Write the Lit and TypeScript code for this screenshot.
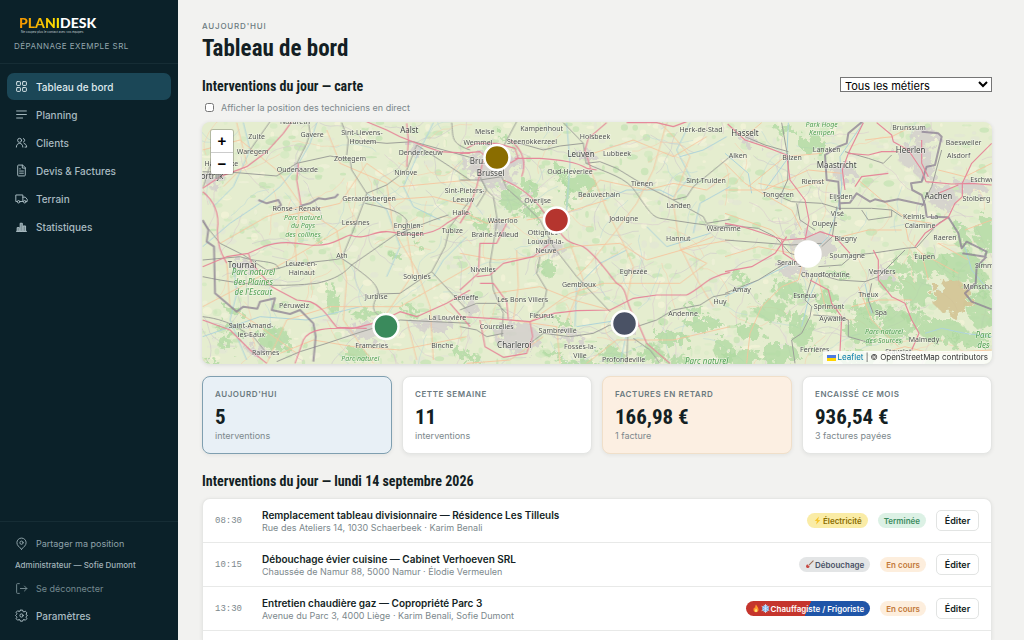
import { LitElement, html, svg, css } from "lit";
import { customElement, property } from "lit/decorators.js";

/* ---------- Icons ---------- */

const stroke = (body: unknown) => html`<svg viewBox="0 0 24 24" width="13" height="13" fill="none"
  stroke="currentColor" stroke-width="1.8" stroke-linecap="round" stroke-linejoin="round" aria-hidden="true">${body}</svg>`;

const icons: Record<string, unknown> = {
  grid: stroke(svg`<rect x="3" y="3" width="7" height="7" rx="1.2"/><rect x="14" y="3" width="7" height="7" rx="1.2"/><rect x="3" y="14" width="7" height="7" rx="1.2"/><rect x="14" y="14" width="7" height="7" rx="1.2"/>`),
  lines: stroke(svg`<path d="M3 5.5h18M3 12h18M3 18.5h11"/>`),
  users: stroke(svg`<circle cx="8.5" cy="8" r="3.7"/><path d="M2.5 20.5c0-4 2.4-6.8 6-6.8s6 2.8 6 6.8"/><path d="M15.5 4.7a3.5 3.5 0 0 1 0 6.6M17 13.8c2.8.6 4.5 3.2 4.5 6.7h-3"/>`),
  file: stroke(svg`<path d="M13.5 2H6.5A1.5 1.5 0 0 0 5 3.5v17A1.5 1.5 0 0 0 6.5 22h11a1.5 1.5 0 0 0 1.5-1.5V7.5z"/><path d="M13.5 2v5.5H19M8.5 13h7M8.5 17h7M8.5 9h1.5"/>`),
  truck: stroke(svg`<path d="M4 17.5H1.5V5.5h13v12H9.5M14.5 9.5h4.5l3.5 4v4h-2M14.5 17.5h.8"/><circle cx="6.7" cy="18" r="2.3"/><circle cx="18" cy="18" r="2.3"/>`),
  chart: html`<svg viewBox="0 0 24 24" width="13" height="13" fill="none" stroke="currentColor" stroke-width="1.8" aria-hidden="true">
    <path d="M2 21h20"/><path fill="currentColor" fill-opacity=".7" d="M4 14h4v7H4zM9.5 6h4v15h-4zM15 11h4.5v10H15z"/></svg>`,
  pin: stroke(svg`<path d="M12 22.5c4.5-4 8.5-7.4 8.5-12a8.5 8.5 0 0 0-17 0c0 4.600 4 8 8.5 12z"/><circle cx="12" cy="10.5" r="3"/>`),
  exit: stroke(svg`<path d="M8 21H4.5A1.5 1.5 0 0 1 3 19.5v-15A1.5 1.5 0 0 1 4.5 3H8M10 12h12M17.5 7.5 22 12l-4.5 4.5"/>`),
  gear: stroke(svg`<circle cx="12" cy="12" r="3"/><path d="M10 2h4l.7 2.7 1.9.8 2.400-1.400 2.900 2.900-1.400 2.400.8 1.900L23 12l-1.900 1.500-.6 1.800 1.400 2.600-2.900 2.900-2.400-1.400-1.900.8L14 22.500h-4l-.7-2.300-1.900-.8L5 20.800l-2.900-2.900 1.400-2.400-.8-1.900L1 12l1.700-1.600.8-1.900L2.100 6.100 5 3.200l2.400 1.400 1.900-.8z"/>`),
};

const emoji: Record<string, unknown> = {
  bolt: html`<svg viewBox="0 0 16 16" width="9" height="9" aria-hidden="true"><path d="M10.5 1 3 9h4l-1.5 6L13 7H9z" fill="#f7c52e"/></svg>`,
  plunger: html`<svg viewBox="0 0 16 16" width="9" height="9" aria-hidden="true"><path d="M15 1 7 9" stroke="#9a6a50" stroke-width="2"/><path d="M4 7.500 8.500 12c-1.500 2-3.500 2.500-5 2L2 12.500c-.5-1.500 0-3.500 2-5z" fill="#c94a43"/></svg>`,
  fire: html`<svg viewBox="0 0 16 16" width="8" height="9" aria-hidden="true"><path d="M8 0c1 3 5 5 5 10a5 5.5 0 0 1-10 0c0-2 1-3.5 2-4.500 0 1.500.5 2 1 2.500C6.500 5 6.500 2 8 0z" fill="#ff9a2b"/><path d="M8 8c.8 1.5 2.5 2.5 2.5 4.500a2.500 2.500 0 0 1-5 0C5.500 10.500 7.500 10 8 8z" fill="#ffe07a"/></svg>`,
  snow: html`<svg viewBox="0 0 16 16" width="9" height="9" aria-hidden="true"><circle cx="8" cy="8" r="6" fill="#7fb3e8"/><path d="M8 0v16M1 4l14 8M15 4 1 12M5.5 1.5 8 4l2.500-2.500M5.500 14.500 8 12l2.500 2.500" stroke="#d8ecff" stroke-width="1.3" fill="none"/></svg>`,
};

/* ---------- Map data: three sheets at three units per pixel ---------- */

type Label = [string, number, number, ("city" | "park" | "park big")?];
interface Sheet {
  origin: number;
  woods: [number, number, number, number][];
  towns: [number, number, number, number][];
  rivers: string;
  minor: string;
  rails: string;
  roads: string;
  borders: string;
  labels: Label[];
}

const sheets: Sheet[] = [
  {
    origin: 200,
    woods: [[210, 645, 50, 35], [385, 520, 18, 45], [500, 570, 60, 14], [575, 395, 20, 10], [75, 610, 40, 14], [60, 655, 22, 20], [455, 690, 34, 18], [345, 345, 16, 8], [90, 560, 18, 14], [640, 360, 10, 8], [20, 720, 30, 12], [620, 560, 28, 10], [770, 690, 22, 12]],
    towns: [[120, 425, 34, 20], [30, 165, 32, 26], [490, 620, 60, 26], [690, 600, 60, 20], [635, 80, 20, 16], [290, 140, 16, 10], [160, 680, 30, 16], [800, 120, 14, 40]],
    rivers: "M8 380 90 310 180 250 240 200 290 140 330 70 350 8M130 8 150 90 100 200 40 260M100 430 110 520 90 600 140 720M500 220 560 270 600 380 560 470M700 8 650 110 610 200 640 260 720 300M800 350 730 420 700 470M8 650 180 590 320 600 480 560",
    minor: "M8 90 120 60 230 150 300 250 285 370 290 440M250 290 420 250 500 130 600 200 810 180M380 30 420 130 560 190 580 330 650 450 690 560 700 720M60 370 200 290 300 260 410 330 440 480 430 600 520 730M8 560 160 480 300 400 470 300M200 730 260 600 390 560 600 560 810 440M620 340 640 460 560 580M110 8 140 130 70 200M560 240 700 230 810 260M240 700 340 660 460 680 600 690 800 650M620 600 650 720M80 430 90 560 180 620 290 700",
    rails: "M8 155 110 158 230 168 290 130 390 108 450 118 455 150 500 220 490 250 460 330 425 415M425 8 445 60 440 105M290 130 320 70 330 40 325 5M60 40 10 200M210 5 150 90M8 420 120 410C180 430 230 420 235 445 300 425 380 425 425 415L455 435 585 345 700 300 745 285M8 470C150 500 250 500 350 490 420 475 440 450 455 435 500 470 535 490 535 525 510 560 520 580 545 590M8 305 60 370 130 405M495 250C540 260 600 270 620 300V340M500 220 560 195 620 150 650 75 750 140 810 180M455 60 560 70 640 65 810 112M810 240 750 320 735 380 695 455 810 580M695 455 600 520 530 522M230 725 300 695 380 670 470 640 600 600 700 605 810 610M8 590C100 600 130 640 160 650L200 700M755 8C760 50 750 70 810 90M130 405 200 450 240 445",
    roads: "M8 205 60 170 140 140 200 95 250 40 275 5M8 215C40 240 60 280 52 330 50 380 70 410 80 430M8 440 80 410 145 400 190 380C250 360 290 370 330 375 390 380 410 360 450 345 500 365 520 325 580 337 640 350 700 345 740 310L790 280H810M145 400 155 430 215 500 290 540 330 545C370 560 390 600 410 622L500 625M8 600 90 630 150 690 200 730M285 730 310 660C330 620 400 625 460 625L540 605 600 575 650 590 740 550 810 510M500 5 560 30 600 50 650 70 720 95 810 100M295 130 290 180 303 255M620 10 625 60 620 140M530 600 560 660M750 550 810 620",
    borders: "M8 300 25 330 20 365 42 380 45 520 75 545 110 575 130 560 172 566 180 545 225 535 215 570 270 582 300 570 340 610 347 650 340 725M175 240 200 250 235 240 243 255 225 268M300 258 330 250 355 235 375 238 405 232 415 222",
    labels: [["Nazareth", 285, 4], ["Zulte", 170, 50], ["Gavere", 336, 42], ["Waregem", 158, 93], ["Harelbeke", 64, 130], ["ortrijk", 36, 170, "city"], ["Oudenaarde", 292, 147], ["Sint-Lievens-", 486, 38], ["Houtem", 489, 65], ["Aalst", 628, 30, "city"], ["Zottegem", 450, 115], ["Denderleeuw", 662, 98], ["Ninove", 617, 156], ["Geraardsbergen", 507, 235], ["Ronse - Renaix", 290, 264], ["Parc naturel", 309, 292, "park"], ["du Pays", 309, 317, "park"], ["des collines", 309, 342, "park"], ["Lessines", 467, 308], ["Enghien-", 625, 315], ["Edingen", 631, 341], ["Halle", 782, 277], ["Tubize", 757, 331], ["Tournai", 126, 436, "city"], ["Parc naturel", 160, 458, "park big"], ["des Plaines", 160, 487, "park big"], ["de l'Escaut", 160, 516, "park big"], ["Leuze-en-", 304, 430], ["Hainaut", 305, 457], ["Ath", 426, 405], ["Soignies", 651, 470], ["Jurbise", 529, 528], ["Péruwelz", 282, 557], ["Saint-Amand-", 153, 615], ["les-Eaux", 154, 642], ["Raismes", 197, 698], ["Frameries", 515, 677], ["La Louvière", 742, 592], ["Binche", 727, 676], ["Parc naturel", 481, 714, "park"]],
  },
  {
    origin: 460,
    woods: [[145, 225, 34, 40], [350, 178, 46, 28], [290, 150, 22, 26], [200, 190, 26, 18], [310, 215, 14, 34], [50, 300, 22, 20], [250, 430, 26, 26], [560, 690, 38, 26], [440, 690, 34, 24], [300, 600, 30, 12], [620, 640, 50, 22], [720, 600, 56, 22], [350, 720, 60, 12], [780, 680, 28, 34], [205, 265, 34, 16], [700, 560, 26, 14], [30, 700, 20, 12], [120, 40, 12, 10], [640, 710, 40, 14], [270, 690, 28, 14], [300, 290, 10, 22]],
    towns: [[90, 130, 62, 62], [365, 95, 26, 20], [160, 640, 66, 44], [265, 370, 34, 18], [20, 550, 16, 30], [480, 615, 40, 20], [310, 635, 46, 12], [150, 110, 30, 18], [110, 310, 22, 16]],
    rivers: "M320 8 330 130 320 270 290 330M690 8 650 90 690 170 640 230 600 210 500 210 430 240M800 50 730 90 660 110M500 390 420 430 350 500 345 620M810 200 720 250 700 340M480 730 500 640 480 600 350 620M560 320 620 380 750 340",
    minor: "M360 240 420 180 560 210 640 190 740 210 810 160M350 470 390 430 470 330 530 250 580 150 620 8M390 145 440 270 490 370 520 440 500 540M200 300 310 280 440 240M0 400 110 420 230 410 330 380 480 370 560 420 700 380 810 360M330 370 370 480 320 600M170 390 175 500 160 600M0 270 80 310 180 290M210 605 330 520 430 490 560 490 660 490 740 430 660 390 760 350M640 250 660 380 700 460 760 560M400 100 520 60 640 110 740 50M600 8 650 60 690 110 640 240M380 730 470 660 640 660 810 620M100 520 240 500 340 540 450 570M150 600 290 620 300 730M20 730 150 720 250 650",
    rails: "M125 170 140 205 180 240 240 300 280 380 350 470 450 575M170 5 130 80M310 8 370 70 300 78 250 90 150 62M370 70 378 130C440 160 500 170 530 220 570 280 580 290 600 295L700 310 780 320 810 318M378 130 420 125 470 145 560 200 640 240 730 290 740 310 810 298M640 240 680 230 700 200 810 110M65 180 80 210 100 230 112 300 90 430 100 510 130 580 125 650M0 620 50 630 80 650 130 640M240 410 230 460 260 510 250 560 220 590M210 670 250 640 330 650 400 640 450 615 500 630 590 600 640 570 720 555 760 530 810 520M503 650 500 730M520 655 570 690 600 730M0 570 50 550 110 550 140 580M0 180 60 180 125 170M50 260 80 210 60 170",
    roads: "M0 100 60 95 100 130M20 85 50 70 110 70 165 85 175 115 150 130M165 115 240 115C300 120 350 125 380 145L410 150M440 8 385 55 375 90 392 145M150 60C190 90 200 130 185 170M130 180C180 200 220 230 250 275L310 350C330 375 350 370 370 380 400 400 430 440 470 490 510 510 490 550 530 600L560 670 630 730M280 580 350 572 450 570 520 535 590 525 680 525C730 500 740 470 810 457M0 510 55 460 60 370H110L140 310M0 590 90 595 210 605 280 580M60 600 75 680 130 712 200 700 218 650 210 605M60 490 100 490 140 545 145 600M50 470 90 465 130 430 220 410 270 370M70 120 50 200 30 260 0 310M500 8 590 8 640 20 680 5",
    borders: "",
    labels: [["Meise", 74, 34], ["Wemmel", 54, 66], ["Kampenhout", 245, 26], ["Steenokkerzeel", 216, 65], ["Holsbeek", 405, 49], ["Herk-de-Stad", 723, 27], ["Leuven", 363, 102, "city"], ["Lubbeek", 471, 100], ["Bruxelles -", 88, 124, "city"], ["Brussel", 92, 159, "city"], ["Oud-Heverlee", 330, 153], ["Sint-Pieters-", 14, 211], ["Leeuw", 10, 239], ["Tienen", 546, 189], ["Sint-Truiden", 738, 181], ["Beauvechain", 417, 222], ["Overijse", 233, 240], ["Landen", 656, 257], ["Waterloo", 128, 300], ["Jodoigne", 491, 294], ["Braine-l'Alleud", 105, 343], ["Ottignies-", 252, 338], ["Louvain-la-", 257, 365], ["Neuve", 258, 391], ["Waremme", 791, 325], ["Hannut", 655, 355], ["Nivelles", 69, 447], ["Eghezée", 521, 455], ["Gembloux", 357, 494], ["Seneffe", 18, 531], ["Les Bons Villers", 188, 538], ["Fleurus", 245, 587], ["Huy", 780, 545], ["Andenne", 669, 580], ["Courcelles", 110, 619], ["Sambreville", 293, 630], ["Charleroi", 163, 675, "city"], ["Fosses-la-", 360, 679], ["Ville", 360, 706], ["Profondeville", 491, 718], ["Parc naturel", 740, 724, "park big"]],
  },
  {
    origin: 725,
    woods: [[250, 62, 38, 28], [165, 15, 30, 12], [600, 420, 60, 34], [700, 430, 60, 50], [770, 330, 30, 60], [560, 500, 50, 44], [640, 620, 70, 36], [500, 600, 46, 50], [420, 560, 44, 26], [300, 530, 32, 30], [180, 500, 50, 28], [130, 560, 50, 34], [220, 620, 36, 50], [400, 620, 50, 40], [380, 700, 60, 20], [150, 690, 60, 30], [60, 620, 40, 26], [40, 700, 50, 24], [760, 560, 40, 60], [700, 340, 20, 40], [510, 430, 30, 20], [560, 580, 34, 26], [30, 460, 26, 16], [760, 480, 20, 40], [480, 480, 30, 20], [720, 650, 60, 20], [330, 450, 26, 12]],
    towns: [[250, 365, 66, 44], [345, 145, 34, 28], [60, 50, 24, 16], [555, 95, 52, 34], [640, 220, 44, 36], [590, 40, 44, 24], [460, 455, 32, 16], [190, 440, 46, 20], [720, 190, 50, 20], [590, 145, 30, 24]],
    rivers: "M415 8 345 110 350 200 340 260 310 350 260 400 180 440 0 530M190 8 185 120 120 210M280 470 250 540 230 620M420 490 440 580M600 640 650 625 720 640 800 650M720 380 740 450 790 510M0 100 70 160 80 220",
    minor: "M0 210 120 210 250 150 350 160M70 200 180 110 290 100M0 130 60 190 200 270 230 330M400 180 470 240 550 300 620 310M540 310 550 360 590 400 610 480M590 400 700 460M470 700 540 680 620 700 800 690M0 280 140 330 170 360M65 730 75 640 110 560 170 500 220 480 235 420M420 60 500 50 560 20M640 150 720 170 800 130M60 50 110 8M280 470 300 560 350 570M350 350 430 330 530 330M380 560 460 540 560 540M640 370 730 420M720 330 800 300M100 190 200 210 300 180M0 410 100 380 200 400M400 500 440 600 520 680",
    rails: "M170 8 190 120 188 180 165 230 200 245 290 250 340 265 440 265 500 270 530 290M60 50 120 75 190 95M0 315 100 325 150 350 170 372 195 400 230 410M0 360 200 375 290 370M335 260 322 350 290 380M280 440 350 435 385 405 440 400 540 385 575 382 640 310 670 292M270 460 340 480 420 485 460 470 540 390M0 520 100 480 180 430M262 470 240 540 260 560 255 590 230 640 200 660 210 730M360 95 430 115 475 130 500 105M215 250 225 300 270 330M440 490 430 540 445 580M265 585 330 590 370 600 370 650 440 670M650 90 620 200 590 260M410 270 430 300 500 290 500 270",
    roads: "M8 12 60 60 120 80 185 105 195 180 240 240 252 300 240 360M0 310C80 320 130 350 180 360L240 355 285 335 330 350 375 400M0 455 80 440 150 400 185 350M360 210 352 150 370 100 415 8M370 100 430 105 470 95 520 95M455 8 500 45 505 65 550 90 590 150 603 185 680 192 740 190 800 195M800 70 740 130 712 190 712 230 690 250 670 292 600 340 570 380M445 390 460 420 460 480 500 530 540 550 560 600 582 640 560 690M255 480 310 510 320 550 350 590 345 695M170 360 175 400 220 430 250 420M590 60 590 130 610 170M390 200 410 170 490 160M640 220 700 195",
    borders: "M412 5 370 40 365 70 340 80 300 105 305 180 340 185 345 270M345 250 375 248 395 220 435 245 450 238 480 245 520 238 600 255 590 225 562 210 558 190 590 185 605 140 630 135 650 50 640 40 590 35M600 255 605 290 670 292 700 340 710 385 725 365 785 395 780 410 712 400M785 410 755 440 752 490 720 520 740 545 800 568",
    labels: [["Hasselt", 60, 39, "city"], ["Park Hoge", 290, 13, "park"], ["Kempen", 290, 38, "park"], ["Lanaken", 305, 89], ["Alken", 39, 106], ["Bilzen", 201, 112], ["Maastricht", 335, 136, "city"], ["Riemst", 263, 185], ["Brunssum", 552, 22], ["Heerlen", 557, 92, "city"], ["Baesweiler", 716, 67], ["Alsdorf", 701, 105], ["Eschweiler", 788, 178], ["Tongeren", 160, 224], ["Eijsden", 348, 229], ["Aachen", 640, 229, "city"], ["Stolberg", 754, 236], ["Visé", 337, 280], ["Kelmis - La", 587, 290], ["Calamine", 585, 316], ["Oupeye", 299, 311], ["Blegny", 362, 355], ["Raeren", 660, 352], ["Soumagne", 367, 405], ["Eupen", 599, 408], ["Seraing", 194, 427], ["Simmerath", 804, 436], ["Chaudfontaine", 301, 463], ["Verviers", 472, 453], ["Monschau", 766, 499], ["Amay", 50, 507], ["Esneux", 240, 525], ["Theux", 430, 523], ["Sprimont", 312, 560], ["Spa", 468, 577], ["Aywaille", 323, 596], ["Parc naturel", 477, 634, "park"], ["des Sources", 476, 660, "park"], ["Malmedy", 597, 657], ["Parc", 775, 646, "park big"], ["des", 775, 676, "park big"], ["Ferrières", 269, 689], ["Stavelot", 520, 694]],
  },
];

/* Repeatable scatter of fields, copses and lanes over the whole map */
const scatter = () => {
  let seed = 77;
  const rnd = () => (seed = (seed * 16807) % 2147483647) / 2147483647;
  const fields = Array.from({ length: 1500 }, () => {
    const x = 202 + rnd() * 792;
    const y = 122 + rnd() * 242;
    const tone = ["#d2e8bf", "#f5f3d9", "#dcebc8", "#c3e2b2", "#f0f1d9", "#e2e6d4"][Math.floor(rnd() * 6)];
    return svg`<ellipse cx=${x} cy=${y} rx=${1 + rnd() * 5} ry=${1 + rnd() * 3} fill=${tone} opacity=".7"/>`;
  });
  const lanes = Array.from({ length: 300 }, () => {
    let x = 202 + rnd() * 792;
    let y = 122 + rnd() * 242;
    let angle = rnd() * 6.28;
    let d = `M${x} ${y}`;
    for (let i = 0; i < 8; i++) {
      angle += rnd() - 0.5;
      x += Math.cos(angle) * 6;
      y += Math.sin(angle) * 6;
      d += `L${x} ${y}`;
    }
    const tone = ["#cbc6cb", "#f6cfae", "#d9c9cf", "#bfd9d8"][Math.floor(rnd() * 4)];
    return svg`<path d=${d} fill="none" stroke=${tone} stroke-width=".7" opacity=".8"/>`;
  });
  return [fields, lanes];
};

const pins = [
  { x: 497, y: 157.5, color: "#8a6d00" },
  { x: 556.5, y: 220, color: "#b5352e" },
  { x: 808, y: 254, color: "#ffffff" },
  { x: 624.5, y: 323.5, color: "#4a5265" },
  { x: 386, y: 326.5, color: "#3a8a5c" },
];

@customElement("region-map")
export class RegionMap extends LitElement {
  static styles = css`
    :host { display: block; position: relative; height: 242px; border-radius: 8px; overflow: hidden; background: #e5edcf; box-shadow: 0 1px 4px rgb(20 30 30 / 0.12); }
    .canvas { display: block; width: 100%; height: 100%; }
    .road { stroke: #e68397; stroke-width: 3.5; opacity: 0.95; }
    .rail { stroke: #9d9f99; stroke-width: 3; }
    .border { stroke: #8b7f93; stroke-width: 6; opacity: 0.75; }
    .river { stroke: #aed3da; stroke-width: 3; }
    .minor { stroke: #f7c39c; stroke-width: 3; opacity: 0.85; }
    .label { font-family: "Noto Sans", sans-serif; font-size: 7px; fill: #50534f; text-anchor: middle; paint-order: stroke; stroke: rgb(255 255 255 / 0.55); stroke-width: 1px; }
    .city { font-size: 8px; fill: #424542; }
    .park { font-style: italic; fill: #4c9d4d; }
    .big { font-size: 8px; }
    .zoom { position: absolute; top: 8px; left: 9px; display: grid; border-radius: 2px; overflow: hidden; box-shadow: 0 0 0 1px rgb(0 0 0 / 0.22); }
    .zoom button { width: 22px; height: 22px; padding: 0; border: 0; background: #fff; color: #000; font: bold 15px/20px "Liberation Sans", sans-serif; }
    .zoom button + button { border-top: 1px solid #ccc; }
    .credit { position: absolute; right: 0; bottom: 0; display: flex; align-items: center; gap: 2px; padding: 0 4px; background: rgb(255 255 255 / 0.8); font: 8px/13px Inter, sans-serif; color: #333; }
    .credit a { color: #0078a8; text-decoration: none; }
  `;

  render() {
    return html`
      <svg class="canvas" viewBox="202 122 790 242" preserveAspectRatio="xMidYMid slice" role="img" aria-label="Carte des interventions">
        <defs>
          <filter id="haze" x="-20%" y="-20%" width="140%" height="140%">
            <feTurbulence type="fractalNoise" baseFrequency=".05" numOctaves="3" seed="4" result="n"/>
            <feDisplacementMap in="SourceGraphic" in2="n" scale="70"/>
          </filter>
        </defs>
        ${scatter()}
        ${sheets.map((s) => svg`<g transform="translate(${s.origin} 120) scale(.333333)" fill="none" stroke-linejoin="round">
          <g filter="url(#haze)">
            ${s.woods.map(([x, y, a, b]) => svg`<ellipse cx=${x + 12} cy=${y + 12} rx=${a} ry=${b} fill="#add8a0" opacity=".75"/>`)}
            ${s.towns.map(([x, y, a, b]) => svg`<ellipse cx=${x + 12} cy=${y + 12} rx=${a} ry=${b} fill="#d3cfcc" opacity=".85"/>`)}
            ${s.origin === 725 ? svg`<ellipse cx="680" cy="532" rx="56" ry="50" fill="#d3c394" opacity=".9"/>` : ""}
          </g>
          <path class="river" d=${s.rivers}/>
          <path class="minor" d=${s.minor}/>
          <path class="rail" d=${s.rails}/>
          <path class="border" d=${s.borders}/>
          <path class="road" d=${s.roads}/>
        </g>`)}
        ${sheets.map((s) => s.labels.map(([text, x, y, kind = ""]) => svg`<text class="label ${kind}" x=${s.origin + x / 3} y=${122.5 + y / 3}>${text}</text>`))}
        ${pins.map((p) => svg`<circle cx=${p.x} cy=${p.y} r="12.5" fill=${p.color} stroke="#fff" stroke-width="2.5"/>`)}
      </svg>
      <div class="zoom"><button aria-label="Zoom avant">+</button><button aria-label="Zoom arrière">−</button></div>
      <div class="credit">
        <svg width="9" height="6" viewBox="0 0 9 6" aria-hidden="true"><path fill="#4c7be1" d="M0 0h9v3H0z"/><path fill="#ffd500" d="M0 3h9v3H0z"/></svg>
        <span><a href="#leaflet">Leaflet</a> | © OpenStreetMap contributors</span>
      </div>`;
  }
}

/* ---------- Statistic card ---------- */

@customElement("stat-card")
export class StatCard extends LitElement {
  @property() label = "";
  @property() value = "";
  @property() note = "";

  static styles = css`
    :host { display: block; padding: 12px; border: 1px solid #e4e5e3; border-radius: 8px; background: #fff; box-shadow: 0 1px 4px rgb(20 30 30 / 0.07); box-sizing: border-box; height: 78px; }
    :host([tone="info"]) { background: #e8f0f6; border-color: #7f9fb0; }
    :host([tone="warn"]) { background: #fcefe2; border-color: #f0dfc9; }
    .label { font: 600 8px/11px Inter, sans-serif; letter-spacing: 0.07em; text-transform: uppercase; color: #6b7a7f; }
    .value { font: 700 21px/26px "Roboto Condensed", "Liberation Sans Narrow", Roboto, sans-serif; color: #141f24; margin-top: 4px; }
    .note { font: 9px/11px Inter, sans-serif; color: #7c888c; }
  `;

  render() {
    return html`<div class="label">${this.label}</div><div class="value">${this.value}</div><div class="note">${this.note}</div>`;
  }
}

/* ---------- Page ---------- */

const nav = [
  ["grid", "Tableau de bord"],
  ["lines", "Planning"],
  ["users", "Clients"],
  ["file", "Devis & Factures"],
  ["truck", "Terrain"],
  ["chart", "Statistiques"],
];

const jobs = [
  { time: "08:30", title: "Remplacement tableau divisionnaire — Résidence Les Tilleuls", info: "Rue des Ateliers 14, 1030 Schaerbeek · Karim Benali", trade: "Électricité", kind: "electric", marks: ["bolt"], state: "Terminée", done: true },
  { time: "10:15", title: "Débouchage évier cuisine — Cabinet Verhoeven SRL", info: "Chaussée de Namur 88, 5000 Namur · Élodie Vermeulen", trade: "Débouchage", kind: "drain", marks: ["plunger"], state: "En cours", done: false },
  { time: "13:30", title: "Entretien chaudière gaz — Copropriété Parc 3", info: "Avenue du Parc 3, 4000 Liège · Karim Benali, Sofie Dumont", trade: "Chauffagiste / Frigoriste", kind: "heat", marks: ["fire", "snow"], state: "En cours", done: false },
];

@customElement("app-root")
export class AppRoot extends LitElement {
  static styles = css`
    :host { display: grid; grid-template-columns: 178px minmax(0, 1fr); height: 100vh; overflow: hidden; background: #f2f2f0; color: #141f24; font-family: Inter, sans-serif; }
    * { box-sizing: border-box; }
    button, a { font-family: inherit; }

    .side { display: flex; flex-direction: column; background: #0b2129; color: #a9bbc1; }
    .brand { height: 64px; padding: 15px 14px 0; border-bottom: 1px solid #162d35; }
    .logo { display: block; width: max-content; margin-left: 5px; font: 900 14px/15px Lato, sans-serif; color: #fff; }
    .logo b { font-weight: 900; background: linear-gradient(90deg, #f39200, #ffe600); -webkit-background-clip: text; background-clip: text; color: transparent; }
    .motto { margin-left: 7px; font-size: 3px; line-height: 4px; color: #c4ced1; white-space: nowrap; }
    .company { margin-top: 7px; font-size: 8px; line-height: 10px; letter-spacing: 0.06em; color: #93a6ad; white-space: nowrap; }
    .nav { display: grid; gap: 1px; padding: 9px 7px; }
    .link { display: flex; align-items: center; gap: 8px; height: 27px; padding: 0 8px; border: 0; border-radius: 7px; background: none; color: #a9bbc1; font-size: 10px; font-weight: 500; text-decoration: none; white-space: nowrap; text-align: left; }
    .link svg { flex: none; }
    .active { background: #1b4757; color: #dfeaee; }
    .foot { margin-top: auto; display: grid; padding: 8px 7px 11px; border-top: 1px solid #162d35; }
    .quiet { font-size: 9px; font-weight: 400; color: #8fa2a9; }
    .dim { color: #74898f; }
    .who { padding: 3px 8px 5px; font-size: 8px; line-height: 10px; font-weight: 500; color: #a3b4ba; white-space: nowrap; }

    .main { display: flex; flex-direction: column; min-width: 0; padding: 21px 32px 0 24px; overflow: hidden; }
    .crumb { font-size: 8px; line-height: 11px; letter-spacing: 0.1em; color: #6b7a7f; font-weight: 500; }
    h1, h2 { margin: 0; font-family: "Roboto Condensed", "Liberation Sans Narrow", Roboto, sans-serif; font-weight: 700; }
    h1 { font-size: 23px; line-height: 26px; margin-top: 4px; }
    h2 { font-size: 14px; line-height: 18px; }
    .bar { display: flex; justify-content: space-between; align-items: flex-start; margin-top: 15px; }
    select { width: 152px; height: 15px; padding: 0; border: 1px solid #767676; border-radius: 0; background: #fff; color: #000; font: 11px Inter, sans-serif; line-height: 13px; }
    .live { display: flex; align-items: center; gap: 7px; margin: 7px 0 9px 3px; font-size: 9px; line-height: 11px; color: #7c888c; }
    .live input { width: 9px; height: 9px; margin: 0; }
    .stats { display: grid; grid-template-columns: repeat(4, 1fr); gap: 10px; margin: 12px 0 18px; }
    .list { flex: 1; min-height: 142px; margin: 8px 0 0; padding: 0; list-style: none; background: #fff; border: 1px solid #e6e7e5; border-bottom: 0; border-radius: 8px 8px 0 0; box-shadow: 0 1px 4px rgb(20 30 30 / 0.07); }
    .job { display: flex; align-items: center; gap: 10px; height: 44px; padding: 0 12px; border-bottom: 1px solid #e8e9e8; }
    .time { width: 37px; font: 9px "Liberation Mono", monospace; color: #7c888c; }
    .what { flex: 1; min-width: 0; white-space: nowrap; }
    .title { font-size: 10px; line-height: 14px; font-weight: 600; }
    .info { font-size: 9px; line-height: 12px; color: #7c888c; }
    .tag { display: flex; align-items: center; gap: 1px; height: 15px; padding: 0 6px; border-radius: 8px; font-size: 8px; font-weight: 600; white-space: nowrap; }
    .electric { background: #faeca6; color: #8a6d00; }
    .drain { background: #e3e5e6; color: #4a5265; }
    .heat { background: linear-gradient(115deg, #c5352d 50%, #1f55a8 50%); color: #fff; }
    .done { background: #dcf1e5; color: #3c8c61; }
    .doing { background: #fdeedd; color: #c2793a; }
    .edit { width: 43px; height: 21px; padding: 0; border: 1px solid #e2e4e3; border-radius: 5px; background: #fff; color: #141f24; font-size: 9px; font-weight: 600; }
  `;

  render() {
    return html`
      <aside class="side">
        <header class="brand">
          <span class="logo"><b>PLANI</b>DESK</span>
          <div class="motto">Ne coupez plus le contact avec vos équipes</div>
          <div class="company">DÉPANNAGE EXEMPLE SRL</div>
        </header>
        <nav class="nav">
          ${nav.map(([icon, text], i) => html`<a class="link ${i === 0 ? "active" : ""}" href="#${icon}">${icons[icon]}${text}</a>`)}
        </nav>
        <div class="foot">
          <button class="link quiet">${icons.pin}Partager ma position</button>
          <div class="who">Administrateur — Sofie Dumont</div>
          <button class="link quiet dim">${icons.exit}Se déconnecter</button>
          <a class="link" href="#parametres">${icons.gear}Paramètres</a>
        </div>
      </aside>
      <main class="main">
        <div class="crumb">AUJOURD'HUI</div>
        <h1>Tableau de bord</h1>
        <div class="bar">
          <h2>Interventions du jour — carte</h2>
          <select aria-label="Métier"><option>Tous les métiers</option></select>
        </div>
        <label class="live"><input type="checkbox" />Afficher la position des techniciens en direct</label>
        <region-map></region-map>
        <section class="stats">
          <stat-card tone="info" label="Aujourd'hui" value="5" note="interventions"></stat-card>
          <stat-card label="Cette semaine" value="11" note="interventions"></stat-card>
          <stat-card tone="warn" label="Factures en retard" value="166,98 €" note="1 facture"></stat-card>
          <stat-card label="Encaissé ce mois" value="936,54 €" note="3 factures payées"></stat-card>
        </section>
        <h2>Interventions du jour — lundi 14 septembre 2026</h2>
        <ul class="list">
          ${jobs.map((j) => html`<li class="job">
            <time class="time">${j.time}</time>
            <div class="what"><div class="title">${j.title}</div><div class="info">${j.info}</div></div>
            <span class="tag ${j.kind}">${j.marks.map((m) => emoji[m])}${j.trade}</span>
            <span class="tag ${j.done ? "done" : "doing"}">${j.state}</span>
            <button class="edit">Éditer</button>
          </li>`)}
        </ul>
      </main>`;
  }
}
